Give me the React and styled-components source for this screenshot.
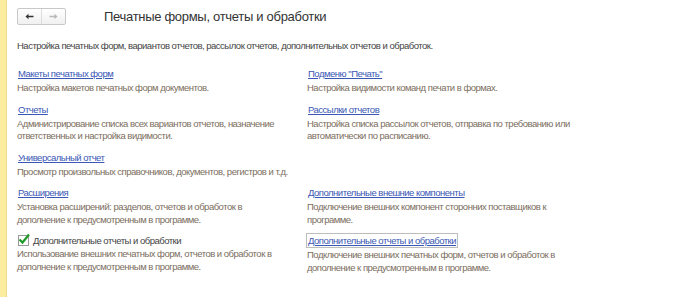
import React from "react";
import styled, { createGlobalStyle } from "styled-components";

const Global = createGlobalStyle`
  html, body {
    margin: 0;
    padding: 0;
    background: #fff;
  }
  body {
    font-family: "Liberation Sans", Arial, sans-serif;
  }
`

const Page = styled.div`
  display: flex;
  width: 700px;
  height: 300px;
  overflow: hidden;
`

const Strip = styled.div`
  width: 6px;
  height: 297px;
  background: #fcec9f;
  border-right: 1px solid #efd98a;
  flex-shrink: 0;
`

const Content = styled.div`
  flex: 1;
  padding: 8px 0 0 10px;
  display: flex;
  flex-direction: column;
  font-size: 9.5px;
  letter-spacing: -0.5px;
  white-space: nowrap;
`

const Header = styled.div`
  display: flex;
  align-items: center;
  height: 17px;
`

const NavGroup = styled.div`
  display: flex;
  border: 1px solid #c8c8c8;
  border-radius: 2px;
  background: linear-gradient(#ffffff, #f0f0f0);
  height: 15px;
`

const NavButton = styled.div`
  width: 23px;
  display: flex;
  align-items: center;
  justify-content: center;
  color: ${p => (p.$disabled ? "#b8b8b8" : "#333")};
  & + & {
    border-left: 1px solid #dcdcdc;
  }
`

const Title = styled.h1`
  margin: 0 0 0 38px;
  font-size: 13px;
  letter-spacing: -0.3px;
  font-weight: normal;
  color: #333;
`

const Intro = styled.p`
  margin: 15px 0 0;
  color: #444;
  line-height: 12px;
`

const Grid = styled.div`
  display: grid;
  grid-template-columns: 290px 1fr;
  row-gap: 8px;
  margin-top: 15px;
`

const Item = styled.div`
  display: flex;
  flex-direction: column;
`

const Link = styled.a`
  align-self: flex-start;
  line-height: 13px;
  color: #3a57b5;
  text-decoration: underline;
  text-underline-offset: 1px;
  cursor: pointer;
  padding: 0 1px;
  margin-left: -1px;
  border: 1px solid ${p => (p.$focused ? "#bdbdbd" : "transparent")};
  margin-top: -1px;
`

const Desc = styled.div`
  line-height: 12.5px;
  color: #7b6e5e;
  margin-top: 1px;
`

const CheckRow = styled.label`
  display: flex;
  align-items: center;
  gap: 4px;
  line-height: 13px;
  color: #444;
`

const Box = styled.span`
  width: 9px;
  height: 9px;
  border: 1px solid #9a9a9a;
  background: #fff;
  position: relative;
  flex-shrink: 0;
  margin-left: 1px;
`

function Arrow({ left }) {
  return (
    <svg width="9" height="7" viewBox="0 0 9 7">
      {left ? (
        <path d="M0.5 3.5 L3.5 0.8 V2.8 H8.5 V4.2 H3.5 V6.2 Z" fill="currentColor" />
      ) : (
        <path d="M8.5 3.5 L5.5 0.8 V2.8 H0.5 V4.2 H5.5 V6.2 Z" fill="currentColor" />
      )}
    </svg>
  )
}

function Check() {
  return (
    <svg width="12" height="12" viewBox="0 0 12 12" style={{ position: "absolute", left: -1, top: -3 }}>
      <path d="M1.5 6.5 L4.5 9.5 L11 1.5" stroke="#1f9a2a" strokeWidth="2.2" fill="none" />
    </svg>
  )
}

const left = [
  { title: "Макеты печатных форм", lines: ["Настройка макетов печатных форм документов."] },
  { title: "Отчеты", lines: ["Администрирование списка всех вариантов отчетов, назначение", "ответственных и настройка видимости."] },
  { title: "Универсальный отчет", lines: ["Просмотр произвольных справочников, документов, регистров и т.д."] },
  { title: "Расширения", lines: ["Установка расширений: разделов, отчетов и обработок в", "дополнение к предусмотренным в программе."] },
  { check: true, title: "Дополнительные отчеты и обработки", lines: ["Использование внешних печатных форм, отчетов и обработок в", "дополнение к предусмотренным в программе."] },
]

const right = [
  { title: "Подменю \"Печать\"", lines: ["Настройка видимости команд печати в формах."] },
  { title: "Рассылки отчетов", lines: ["Настройка списка рассылок отчетов, отправка по требованию или", "автоматически по расписанию."] },
  null,
  { title: "Дополнительные внешние компоненты", lines: ["Подключение внешних компонент сторонних поставщиков к", "программе."] },
  { title: "Дополнительные отчеты и обработки", focused: true, lines: ["Подключение внешних печатных форм, отчетов и обработок в", "дополнение к предусмотренным в программе."] },
]

function Entry({ item }) {
  if (!item) return <Item />
  return (
    <Item>
      {item.check ? (
        <CheckRow>
          <Box><Check /></Box>
          {item.title}
        </CheckRow>
      ) : (
        <Link $focused={item.focused}>{item.title}</Link>
      )}
      <Desc>
        {item.lines.map((l, i) => (
          <div key={i}>{l}</div>
        ))}
      </Desc>
    </Item>
  )
}

export default function App() {
  return (
    <>
      <Global />
      <Page>
        <Strip />
        <Content>
          <Header>
            <NavGroup>
              <NavButton><Arrow left /></NavButton>
              <NavButton $disabled><Arrow /></NavButton>
            </NavGroup>
            <Title>Печатные формы, отчеты и обработки</Title>
          </Header>
          <Intro>Настройка печатных форм, вариантов отчетов, рассылок отчетов, дополнительных отчетов и обработок.</Intro>
          <Grid>
            {left.map((l, i) => (
              <React.Fragment key={i}>
                <Entry item={l} />
                <Entry item={right[i]} />
              </React.Fragment>
            ))}
          </Grid>
        </Content>
      </Page>
    </>
  )
}
